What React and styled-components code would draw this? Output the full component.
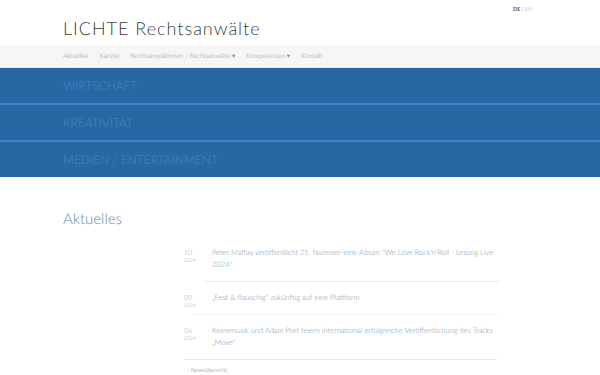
import React from "react";
import styled, { createGlobalStyle } from "styled-components";

const Global = createGlobalStyle`
  html, body { margin: 0; padding: 0; background: #fff; }
  body { font-family: Lato, "Open Sans", sans-serif; text-rendering: geometricPrecision; }
`;

const Container = styled.div`
  width: 474px;
  margin: 0 auto;
  position: relative;
`;

const Header = styled.header`
  height: 45px;
  background: #fff;
`;

const HeaderInner = styled(Container)`
  height: 45px;
  display: flex;
  align-items: flex-end;
  justify-content: space-between;
`;

const Brand = styled.div`
  font-family: Lato, sans-serif;
  font-weight: 300;
  font-size: 18px;
  letter-spacing: 1px;
  color: #3a3a3a;
  padding-bottom: 6px;
`;

const Lang = styled.div`
  position: absolute;
  right: 5px;
  top: 7px;
  font-size: 5.5px;
  color: #ccc;
`;

const LangActive = styled.span`
  color: #555;
  font-weight: 700;
`;

const Nav = styled.nav`
  background: #f6f6f6;
  height: 22px;
  border-bottom: 1px solid #e2e6ea;
`;

const NavInner = styled(Container)`
  display: flex;
  align-items: center;
  height: 22px;
  gap: 11px;
`;

const NavItem = styled.span`
  font-size: 6.5px;
  font-weight: 300;
  color: #8c8c8c;
`;

const Band = styled.section`
  background: #2767a3;
`;

const BandRow = styled.div`
  height: 35px;
  border-bottom: ${(p) => (p.$last ? "none" : "2px solid #3f86c7")};
  display: flex;
  align-items: center;
`;

const BandText = styled(Container)`
  font-family: Lato, sans-serif;
  font-weight: 300;
  font-size: 12px;
  color: #4887c3;
  text-transform: uppercase;
`;

const Main = styled(Container)`
  padding-top: 33px;
`;

const H2 = styled.h2`
  margin: 0;
  font-family: Lato, sans-serif;
  font-weight: 300;
  font-size: 15px;
  color: #5f8cb3;
`;

const NewsList = styled.div`
  margin-left: 109px;
  margin-right: 37px;
  margin-top: 9px;
`;

const NewsItem = styled.div`
  display: flex;
  align-items: flex-start;
  padding: 10px 0 10px 12px;
`;

const Divider = styled.div`
  height: 1px;
  background: ${(p) => p.$color};
  margin-left: ${(p) => p.$from}px;
  margin-right: ${(p) => p.$to}px;
`;

const DateCol = styled.div`
  width: 28px;
  height: 12px;
  flex: none;
  color: #aaa;
  font-weight: 300;
  padding-top: 2px;
  box-sizing: border-box;
`;

const Month = styled.div`
  font-size: 7px;
  line-height: 8px;
`;

const Year = styled.div`
  font-size: 5px;
  line-height: 9px;
`;

const Title = styled.div`
  font-size: 7.5px;
  line-height: 12px;
  font-weight: 300;
  color: #6f93ad;
`;

const More = styled.div`
  font-size: 5.5px;
  color: #b0b0b0;
  padding: 8px 0 0 16px;
`;

const news = [
  { m: "10", y: "2024", t: "Peter Maffay veröffentlicht 21. Nummer-eins-Album \"We Love Rock'n'Roll - Leipzig Live 2024\"", line: "#ececec", from: 33, to: 0 },
  { m: "09", y: "2024", t: "„Fest & flauschig“ zukünftig auf eine Plattform", line: "#f5f5f5", from: 20, to: 0 },
  { m: "06", y: "2024", t: "Keinemusik und Adam Port feiern international erfolgreiche Veröffentlichung des Tracks „Move“", line: "#e8e8e8", from: 12, to: 3 },
];

export default function App() {
  return (
    <>
      <Global />
      <Header>
        <HeaderInner>
          <Brand>LICHTE Rechtsanwälte</Brand>
          <Lang>
            <LangActive>DE</LangActive> | EN
          </Lang>
        </HeaderInner>
      </Header>
      <Nav>
        <NavInner>
          <NavItem>Aktuelles</NavItem>
          <NavItem>Kanzlei</NavItem>
          <NavItem>Rechtsanwältinnen / Rechtsanwälte ▾</NavItem>
          <NavItem>Kompetenzen ▾</NavItem>
          <NavItem>Kontakt</NavItem>
        </NavInner>
      </Nav>
      <Band>
        <BandRow><BandText>Wirtschaft</BandText></BandRow>
        <BandRow><BandText>Kreativität</BandText></BandRow>
        <BandRow $last><BandText>Medien / Entertainment</BandText></BandRow>
      </Band>
      <Main>
        <H2>Aktuelles</H2>
        <NewsList>
          {news.map((n, i) => (
            <React.Fragment key={i}>
              <NewsItem>
                <DateCol>
                  <Month>{n.m}</Month>
                  <Year>{n.y}</Year>
                </DateCol>
                <Title>{n.t}</Title>
              </NewsItem>
              <Divider $color={n.line} $from={n.from} $to={n.to} />
            </React.Fragment>
          ))}
          <More>› Newsübersicht</More>
        </NewsList>
      </Main>
    </>
  );
}
